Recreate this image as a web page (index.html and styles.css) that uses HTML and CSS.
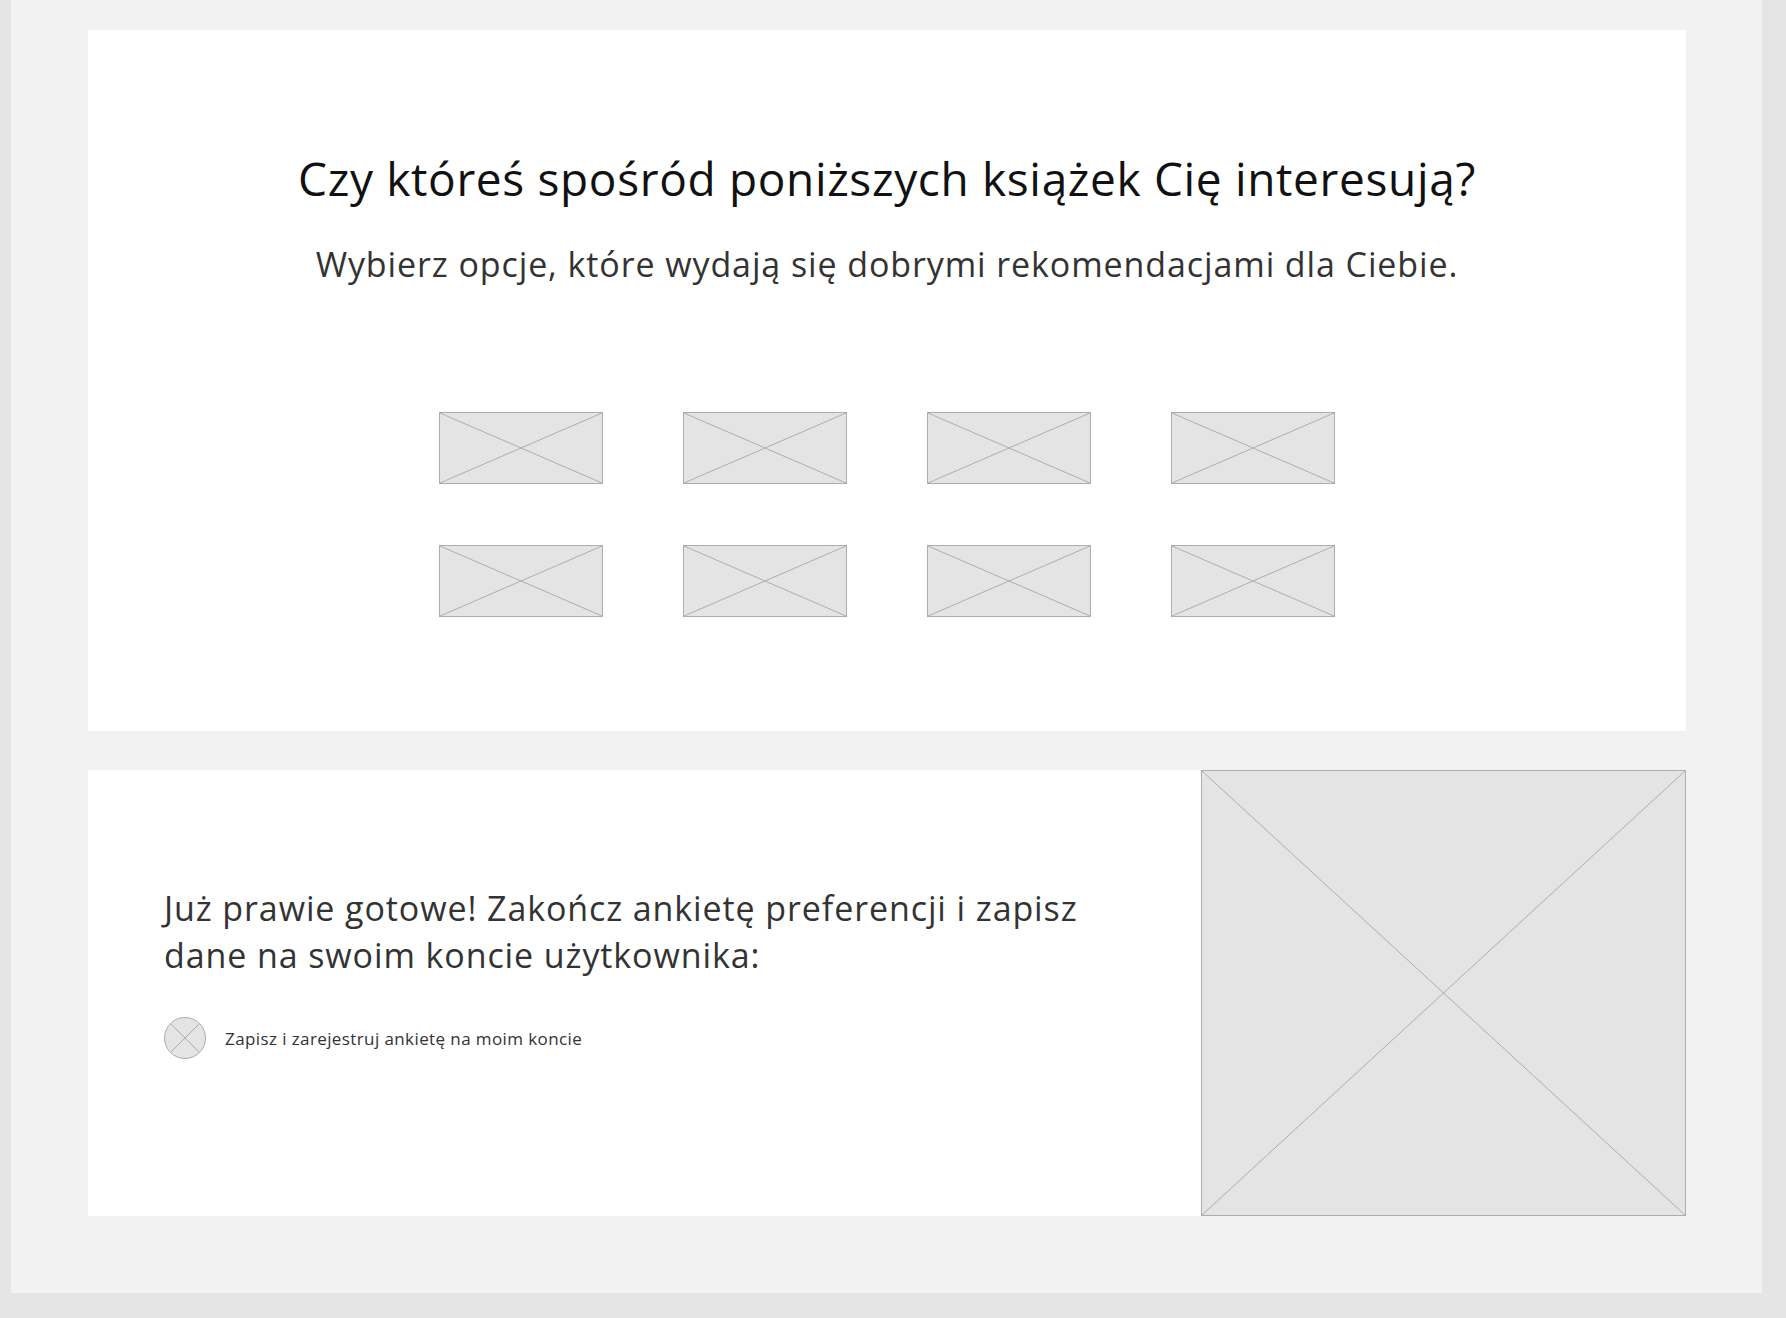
FILE: index.html
```html
<!DOCTYPE html>
<html lang="pl">
<head>
<meta charset="utf-8">
<title>Ankieta preferencji</title>
<link rel="stylesheet" href="styles.css">
</head>
<body>
<div class="frame">
  <section class="card card-books">
    <h1 class="title">Czy któreś spośród poniższych książek Cię interesują?</h1>
    <p class="subtitle">Wybierz opcje, które wydają się dobrymi rekomendacjami dla Ciebie.</p>
    <div class="grid">
      <div class="ph thumb"><svg viewBox="0 0 100 100" preserveAspectRatio="none"><line x1="0" y1="0" x2="100" y2="100"/><line x1="100" y1="0" x2="0" y2="100"/></svg></div>
      <div class="ph thumb"><svg viewBox="0 0 100 100" preserveAspectRatio="none"><line x1="0" y1="0" x2="100" y2="100"/><line x1="100" y1="0" x2="0" y2="100"/></svg></div>
      <div class="ph thumb"><svg viewBox="0 0 100 100" preserveAspectRatio="none"><line x1="0" y1="0" x2="100" y2="100"/><line x1="100" y1="0" x2="0" y2="100"/></svg></div>
      <div class="ph thumb"><svg viewBox="0 0 100 100" preserveAspectRatio="none"><line x1="0" y1="0" x2="100" y2="100"/><line x1="100" y1="0" x2="0" y2="100"/></svg></div>
      <div class="ph thumb"><svg viewBox="0 0 100 100" preserveAspectRatio="none"><line x1="0" y1="0" x2="100" y2="100"/><line x1="100" y1="0" x2="0" y2="100"/></svg></div>
      <div class="ph thumb"><svg viewBox="0 0 100 100" preserveAspectRatio="none"><line x1="0" y1="0" x2="100" y2="100"/><line x1="100" y1="0" x2="0" y2="100"/></svg></div>
      <div class="ph thumb"><svg viewBox="0 0 100 100" preserveAspectRatio="none"><line x1="0" y1="0" x2="100" y2="100"/><line x1="100" y1="0" x2="0" y2="100"/></svg></div>
      <div class="ph thumb"><svg viewBox="0 0 100 100" preserveAspectRatio="none"><line x1="0" y1="0" x2="100" y2="100"/><line x1="100" y1="0" x2="0" y2="100"/></svg></div>
    </div>
  </section>
  <section class="card card-finish">
    <div class="finish-text">
      <p class="lead">Już prawie gotowe! Zakończ ankietę preferencji i zapisz dane na swoim koncie użytkownika:</p>
      <div class="option">
        <div class="ph radio"><svg viewBox="0 0 100 100"><line x1="14.6" y1="14.6" x2="85.4" y2="85.4"/><line x1="85.4" y1="14.6" x2="14.6" y2="85.4"/></svg></div>
        <span class="option-label">Zapisz i zarejestruj ankietę na moim koncie</span>
      </div>
    </div>
    <div class="ph hero"><svg viewBox="0 0 100 100" preserveAspectRatio="none"><line x1="0" y1="0" x2="100" y2="100"/><line x1="100" y1="0" x2="0" y2="100"/></svg></div>
  </section>
</div>
</body>
</html>
```

FILE: styles.css
```css
* { box-sizing: border-box; }
html, body { margin: 0; padding: 0; }
body {
  background: #e5e5e5;
  font-family: "Open Sans", "Liberation Sans", sans-serif;
  width: 1786px;
  height: 1318px;
  overflow: hidden;
}
.frame {
  margin-left: 11px;
  width: 1751px;
  height: 1293px;
  background: #f2f2f2;
  padding: 30px 76px 0 77px;
  display: flex;
  flex-direction: column;
  gap: 39px;
}
.card {
  background: #ffffff;
  width: 1598px;
}
.card-books {
  height: 701px;
  padding-top: 125px;
  display: flex;
  flex-direction: column;
  align-items: center;
}
.title {
  margin: 0;
  font-weight: 400;
  font-size: 46px;
  line-height: 46px;
  color: #111111;
  letter-spacing: 0.65px;
}
.subtitle {
  margin: 46px 0 0;
  font-size: 34px;
  line-height: 34px;
  color: #333333;
  letter-spacing: 0.9px;
}
.grid {
  margin-top: 131px;
  display: grid;
  grid-template-columns: repeat(4, 164px);
  grid-auto-rows: 72px;
  column-gap: 80px;
  row-gap: 61px;
}
.ph {
  background: #e4e4e4;
  border: 1px solid #adadad;
  position: relative;
  overflow: hidden;
}
.ph svg {
  display: block;
  width: 100%;
  height: 100%;
}
.ph line {
  stroke: #adadad;
  stroke-width: 1;
  vector-effect: non-scaling-stroke;
}
.card-finish {
  height: 446px;
  display: flex;
}
.finish-text {
  flex: 1;
  padding: 115px 0 0 76px;
}
.lead {
  margin: 0;
  width: 960px;
  font-size: 34px;
  line-height: 46.7px;
  color: #333333;
  letter-spacing: 0.9px;
}
.option {
  margin-top: 39px;
  display: flex;
  align-items: center;
  gap: 19px;
}
.radio {
  width: 42px;
  height: 42px;
  border-radius: 50%;
  flex: none;
}
.option-label {
  font-size: 17px;
  color: #333333;
  letter-spacing: 0.4px;
}
.hero {
  width: 485px;
  height: 446px;
  flex: none;
}
```
